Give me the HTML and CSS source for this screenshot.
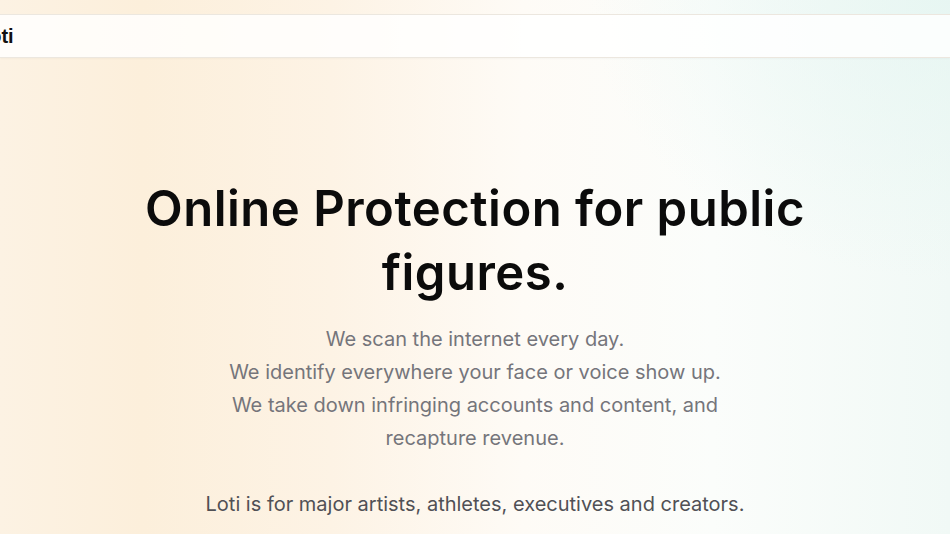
FILE: index.html
```html
<!DOCTYPE html>
<html lang="en">
<head>
    <meta charset="UTF-8">
    <meta name="viewport" content="width=device-width, initial-scale=1.0">
    <title>Loti</title>
    <link rel="stylesheet" href="styles.css">
</head>
<body>
    <div class="page">
        <header class="topbar">
            <div class="logo">Loti</div>
        </header>
        <main class="hero">
            <h1>Online Protection for public figures.</h1>
            <p class="lead">
                We scan the internet every day.<br>
                We identify everywhere your face or voice show up.<br>
                We take down infringing accounts and content, and recapture revenue.
            </p>
            <p class="who">Loti is for major artists, athletes, executives and creators.</p>
        </main>
    </div>
</body>
</html>
```

FILE: styles.css
```css
body, html {
    margin: 0;
    padding: 0;
    height: 100%;
    overflow: hidden;
    font-family: Inter, "Noto Sans", sans-serif;
}
.page {
    min-height: 100vh;
    padding-top: 14px;
    box-sizing: border-box;
    background:
        radial-gradient(ellipse 360px 280px at 100% 0%, rgba(228, 245, 241, 0.75), rgba(228, 245, 241, 0) 100%),
        linear-gradient(90deg, #fcf2e3 0%, #fcefdb 15%, #fdf3e5 35%, #fefbf6 55%, #fbfdfb 75%, #f1f9f6 100%);
}
.topbar {
    height: 42px;
    display: flex;
    align-items: center;
    background-color: rgba(255, 255, 255, 0.82);
    border-top: 1px solid #ece7df;
    border-bottom: 1px solid #ece7df;
    box-shadow: 0 1px 2px rgba(0, 0, 0, 0.03);
}
.logo {
    margin-left: -23px;
    font-family: "Liberation Sans", Arial, sans-serif;
    font-size: 20px;
    font-weight: 700;
    color: #111;
}
.hero {
    text-align: center;
    padding-top: 119px;
}
.hero h1 {
    margin: 0 auto;
    max-width: 720px;
    font-size: 49px;
    line-height: 64px;
    font-weight: 600;
    letter-spacing: 0.5px;
    color: #0b0b0b;
}
.lead {
    margin: 18px auto 0;
    max-width: 540px;
    font-size: 20px;
    line-height: 33px;
    color: #75757b;
}
.who {
    margin: 33px 0 0;
    font-size: 20px;
    line-height: 33px;
    color: #505055;
}
```
